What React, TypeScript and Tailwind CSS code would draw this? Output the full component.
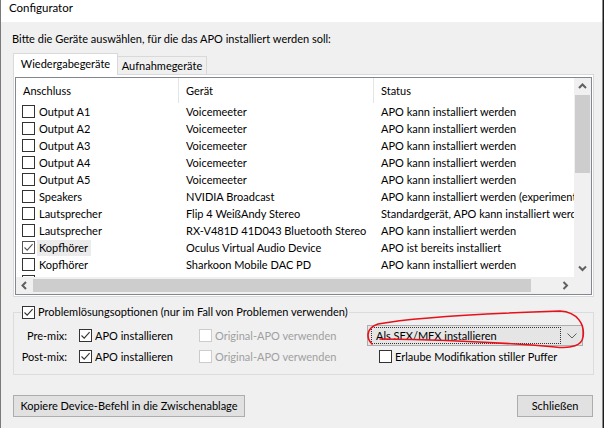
import React from "react";

const FONT = { fontFamily: 'Lato, "Noto Sans", sans-serif' };

function Box({ checked = false, disabled = false, soft = false }: { checked?: boolean; disabled?: boolean; soft?: boolean }) {
  const border = disabled ? "border-[#cccccc]" : soft ? "border-[#555555]" : "border-[#333333]";
  return (
    <span className={`flex h-[13px] w-[13px] shrink-0 items-center justify-center border bg-white ${border}`}>
      {checked && (
        <svg width="11" height="11" viewBox="0 0 11 11">
          <path d="M1.5 5.5 L4.2 8.2 L9.6 2.2" stroke={soft ? "#555" : "#333"} strokeWidth="1.1" fill="none" />
        </svg>
      )}
    </span>
  );
}

const rows: [string, string, string, boolean?][] = [
  ["Output A1", "Voicemeeter", "APO kann installiert werden"],
  ["Output A2", "Voicemeeter", "APO kann installiert werden"],
  ["Output A3", "Voicemeeter", "APO kann installiert werden"],
  ["Output A4", "Voicemeeter", "APO kann installiert werden"],
  ["Output A5", "Voicemeeter", "APO kann installiert werden"],
  ["Speakers", "NVIDIA Broadcast", "APO kann installiert werden (experimentell)"],
  ["Lautsprecher", "Flip 4 WeißAndy Stereo", "Standardgerät, APO kann installiert werden"],
  ["Lautsprecher", "RX-V481D 41D043 Bluetooth Stereo", "APO kann installiert werden"],
  ["Kopfhörer", "Oculus Virtual Audio Device", "APO ist bereits installiert", true],
  ["Kopfhörer", "Sharkoon Mobile DAC PD", "APO kann installiert werden"],
];

function Arrow({ dir }: { dir: "up" | "down" | "left" | "right" }) {
  const d = {
    up: "M1 5 L4.5 1.5 L8 5",
    down: "M1 1.5 L4.5 5 L8 1.5",
    left: "M5 1 L1.5 4.5 L5 8",
    right: "M1.5 1 L5 4.5 L1.5 8",
  }[dir];
  const w = dir === "up" || dir === "down" ? 9 : 7;
  const h = dir === "up" || dir === "down" ? 7 : 9;
  return (
    <svg width={w} height={h} viewBox={`0 0 ${w} ${h}`}>
      <path d={d} stroke="#606060" strokeWidth="2" fill="none" />
    </svg>
  );
}

export default function App() {
  return (
    <div className="relative flex h-[428px] w-[604px] overflow-hidden whitespace-nowrap bg-[#1c1c1c] text-[11px] leading-[16px] text-black" style={FONT}>
      <div className="flex h-[428px] w-[603px] flex-col border-l border-r border-l-[#7a7a7a] border-r-[#8a8a8a] bg-[#f0f0f0]">
        {/* title bar */}
        <div className="h-[22px] shrink-0 bg-white pl-[8px] text-[11.5px]">Configurator</div>

        <div className="flex flex-1 flex-col pl-[12px] pr-[8px]">
          <div className="ml-[-1px] mt-[9px]">Bitte die Geräte auswählen, für die das APO installiert werden soll:</div>

          {/* tabs */}
          <div className="mt-[6px] flex h-[21px] items-end">
            <div className="relative z-10 mb-[-1px] flex h-[22px] w-[105px] shrink-0 items-center justify-center border border-b-0 border-[#d9d9d9] bg-white pb-[1px]">
              Wiedergabegeräte
            </div>
            <div className="flex h-[18px] w-[89px] shrink-0 items-center justify-center border border-b-0 border-l-0 border-[#d9d9d9] bg-[#f0f0f0]">
              Aufnahmegeräte
            </div>
          </div>

          {/* tab panel */}
          <div className="flex h-[223px] flex-col border border-[#d9d9d9] bg-white px-[1px] pb-[1px] pt-[2px]">
            <div className="flex h-[218px] flex-col border border-[#828790] bg-white">
              <div className="flex h-[199px]">
                <div className="flex-1 overflow-hidden">
                  {/* header */}
                  <div className="flex h-[25px] items-center">
                    <div className="flex h-full w-[163px] shrink-0 items-center border-r border-[#e5e5e5] pl-[7px]">Anschluss</div>
                    <div className="flex h-full w-[195px] shrink-0 items-center border-r border-[#e5e5e5] pl-[7px]">Gerät</div>
                    <div className="flex h-full items-center pl-[7px]">Status</div>
                  </div>
                  {rows.map(([a, b, c, sel], i) => (
                    <div key={i} className="flex h-[17px] items-center">
                      <div className="flex w-[163px] shrink-0 items-center pl-[6px]">
                        <Box checked={!!sel} soft={!!sel} />
                        <span className={`ml-[2px] pl-[2px] pr-[3px] ${sel ? "bg-[#ebebeb]" : ""}`}>{a}</span>
                      </div>
                      <div className="w-[195px] shrink-0 overflow-hidden pl-[7px]">{b}</div>
                      <div className="min-w-0 flex-1 overflow-hidden pl-[7px]">{c}</div>
                    </div>
                  ))}
                  {/* partially visible next row */}
                  <div className="flex h-[17px] items-center pl-[6px]">
                    <Box />
                  </div>
                </div>
                {/* vertical scrollbar */}
                <div className="flex w-[17px] shrink-0 flex-col bg-[#f0f0f0]">
                  <div className="flex h-[17px] items-center justify-center">
                    <Arrow dir="up" />
                  </div>
                  <div className="mx-[1px] h-[78px] bg-[#cdcdcd]" />
                  <div className="flex-1" />
                  <div className="flex h-[17px] items-center justify-center">
                    <Arrow dir="down" />
                  </div>
                </div>
              </div>
              {/* horizontal scrollbar */}
              <div className="flex h-[17px]">
                <div className="flex flex-1 items-center bg-[#f0f0f0]">
                  <div className="flex h-[17px] w-[17px] items-center justify-center">
                    <Arrow dir="left" />
                  </div>
                  <div className="my-[1px] h-[13px] w-[498px] bg-[#cdcdcd]" />
                  <div className="flex-1" />
                  <div className="flex h-[17px] w-[17px] items-center justify-center">
                    <Arrow dir="right" />
                  </div>
                </div>
                <div className="w-[17px] bg-[#f0f0f0]" />
              </div>
            </div>
          </div>

          {/* group box */}
          <fieldset className="mt-[7px] border border-[#dcdcdc] px-0 pb-[7px] pt-[5px]">
            <legend className="ml-[7px] flex items-center bg-[#f0f0f0] px-[1px]">
              <Box checked />
              <span className="ml-[3px]">Problemlösungsoptionen (nur im Fall von Problemen verwenden)</span>
            </legend>
            <div className="flex h-[21px] items-center">
              <div className="w-[53px] text-right">Pre-mix:</div>
              <div className="ml-[12px] flex w-[120px] items-center">
                <Box checked />
                <span className="ml-[3px]">APO installieren</span>
              </div>
              <div className="flex w-[168px] items-center text-[#a0a0a0]">
                <Box disabled />
                <span className="ml-[3px]">Original-APO verwenden</span>
              </div>
              <div className="flex h-[21px] w-[216px] items-center border border-[#adadad] bg-[#e5e5e5] pl-[3px] pr-[4px]">
                <div className="flex h-[17px] flex-1 items-center border border-dotted border-[#333] pl-[4px]">
                  Als SFX/MFX installieren
                </div>
                <svg width="12" height="8" viewBox="0 0 12 8" className="ml-[5px]">
                  <path d="M1.5 1.5 L6 6 L10.5 1.5" stroke="#606060" strokeWidth="1" fill="none" />
                </svg>
              </div>
            </div>
            <div className="flex h-[21px] items-center">
              <div className="w-[53px] text-right">Post-mix:</div>
              <div className="ml-[12px] flex w-[120px] items-center">
                <Box checked />
                <span className="ml-[3px]">APO installieren</span>
              </div>
              <div className="flex w-[168px] items-center text-[#a0a0a0]">
                <Box disabled />
                <span className="ml-[3px]">Original-APO verwenden</span>
              </div>
              <div className="flex items-center pl-[12px]">
                <Box />
                <span className="ml-[3px]">Erlaube Modifikation stiller Puffer</span>
              </div>
            </div>
          </fieldset>

          {/* buttons */}
          <div className="mt-[20px] flex justify-between">
            <button className="flex h-[22px] w-[232px] items-center justify-center border border-[#adadad] bg-[#e1e1e1]">
              Kopiere Device-Befehl in die Zwischenablage
            </button>
            <button className="mr-[1px] flex h-[22px] w-[76px] items-center justify-center border border-[#adadad] bg-[#e1e1e1]">
              Schließen
            </button>
          </div>
        </div>
      </div>

      {/* red hand-drawn annotation */}
      <svg className="pointer-events-none absolute left-0 top-0" width="604" height="428" viewBox="0 0 604 428">
        <path
          d="M372 344 C366 338 366 328 378 324 C420 316 500 313 560 311 C578 312 585 325 583 337 C582 345 572 349 555 347 C520 344 470 340 380 339"
          stroke="#e8101a"
          strokeWidth="1.6"
          fill="none"
          strokeLinecap="round"
        />
      </svg>
    </div>
  );
}
